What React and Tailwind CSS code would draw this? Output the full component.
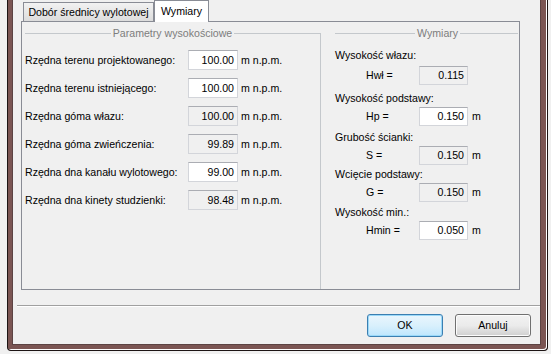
export default function App() {
  const Box = ({ v, ro, right }) => (
    <div
      className={
        (right ? "w-[49px] h-[19px] " : "w-[50px] h-[20px] ") +
        "shrink-0 border border-[#d3d5da] border-t-[#abadb3] flex items-center justify-end pr-[3px] " +
        (ro ? "bg-[#f0f0f0]" : "bg-white")
      }
    >
      {v}
    </div>
  );

  const LRow = ({ label, v, ro }) => (
    <div className="flex items-center h-[20px]">
      <span className="w-[163px] shrink-0 whitespace-nowrap">{label}</span>
      <Box v={v} ro={ro} />
      <span className="ml-[3px] whitespace-nowrap">m n.p.m.</span>
    </div>
  );

  const RRow = ({ label, v, ro, unit, mt }) => (
    <div className={"flex items-center h-[19px] pl-[31px] " + mt}>
      <span className="w-[53px] shrink-0 whitespace-nowrap">{label}</span>
      <Box v={v} ro={ro} right />
      {unit && <span className="ml-[4px]">m</span>}
    </div>
  );

  return (
    <div className="w-[551px] h-[354px] bg-[#f0f0f0] overflow-hidden font-['Liberation_Sans',Arial,sans-serif] text-[10.6px] leading-[13px] text-black">
      <div className="ml-[7px] w-[541px] h-[351px] border-x border-b border-[#1c1414] bg-[#7b5553] pl-[4px] pr-[6px] pb-[5px] rounded-b-[4px] shadow-[inset_-1px_-1px_0_#ffffff]">
        <div className="h-[345px] border-x border-b border-[#5c4343] bg-[#f0f0f0] flex flex-col">
          {/* tabs */}
          <div className="pl-[8px]">
            <div className="flex items-end h-[21px] pl-[2px]">
              <div className="w-[131px] h-[19px] border border-b-0 border-[#898c95] bg-gradient-to-b from-[#f2f2f2] to-[#dcdcdc] flex items-center justify-center">
                Dobór średnicy wylotowej
              </div>
              <div className="relative z-10 -mb-px w-[55px] h-[22px] border border-b-0 border-[#898c95] bg-white flex items-start justify-center pt-[4px]">
                Wymiary
              </div>
            </div>
            {/* panel */}
            <div className="w-[499px] h-[269px] border border-[#898c95] bg-[#f0f0f0] flex pt-[5px] overflow-hidden">
              {/* left group */}
              <div className="ml-[3px] w-[296px] flex flex-col">
                <div className="flex items-center h-[13px]">
                  <div className="flex-1 h-px bg-[#c4c8cc]" />
                  <span className="px-[2px] text-[#7d7d7d]">Parametry wysokościowe</span>
                  <div className="flex-1 self-end h-[7px] border-t border-r border-[#c4c8cc]" />
                </div>
                <div className="flex-1 border-r border-[#c4c8cc] pt-[10px] flex flex-col gap-[8px]">
                  <LRow label="Rzędna terenu projektowanego:" v="100.00" />
                  <LRow label="Rzędna terenu istniejącego:" v="100.00" />
                  <LRow label="Rzędna góma włazu:" v="100.00" ro />
                  <LRow label="Rzędna góma zwieńczenia:" v="99.89" ro />
                  <LRow label="Rzędna dna kanału wylotowego:" v="99.00" />
                  <LRow label="Rzędna dna kinety studzienki:" v="98.48" ro />
                </div>
              </div>
              {/* right group */}
              <div className="ml-[14px] w-[183px] flex flex-col">
                <div className="flex items-center h-[13px]">
                  <div className="w-[80px] h-px bg-[#c4c8cc]" />
                  <span className="px-[2px] text-[#7d7d7d]">Wymiary</span>
                  <div className="flex-1 h-px bg-[#c4c8cc]" />
                </div>
                <div className="flex flex-col">
                  <div className="mt-[9px] h-[13px]">Wysokość włazu:</div>
                  <RRow label="Hwł =" v="0.115" ro mt="mt-[4px]" />
                  <div className="mt-[7px] h-[13px]">Wysokość podstawy:</div>
                  <RRow label="Hp =" v="0.150" unit mt="mt-[2px]" />
                  <div className="mt-[5px] h-[13px]">Grubość ścianki:</div>
                  <RRow label="S =" v="0.150" ro unit mt="mt-[2px]" />
                  <div className="mt-[3px] h-[13px]">Wcięcie podstawy:</div>
                  <RRow label="G =" v="0.150" ro unit mt="mt-[2px]" />
                  <div className="mt-[4px] h-[13px]">Wysokość min.:</div>
                  <RRow label="Hmin =" v="0.050" unit mt="mt-[2px]" />
                </div>
              </div>
            </div>
          </div>
          {/* separator */}
          <div className="mt-[15px] ml-[4px] h-px bg-[#a0a0a0]" />
          <div className="ml-[4px] h-px bg-white" />
          {/* buttons */}
          <div className="mt-[7px] flex justify-end gap-[12px] pr-[9px]">
            <div className="w-[76px] h-[23px] rounded-[3px] border border-[#3c7fb1] bg-gradient-to-b from-[#eaf6fd] via-[#d9f0fc] to-[#bee6fd] shadow-[inset_0_0_0_1px_#9bd9f9] flex items-center justify-center">
              OK
            </div>
            <div className="w-[76px] h-[23px] rounded-[3px] border border-[#707070] bg-gradient-to-b from-[#f2f2f2] via-[#ebebeb] to-[#cfcfcf] shadow-[inset_0_0_0_1px_#fcfcfc] flex items-center justify-center">
              Anuluj
            </div>
          </div>
        </div>
      </div>
    </div>
  );
}
